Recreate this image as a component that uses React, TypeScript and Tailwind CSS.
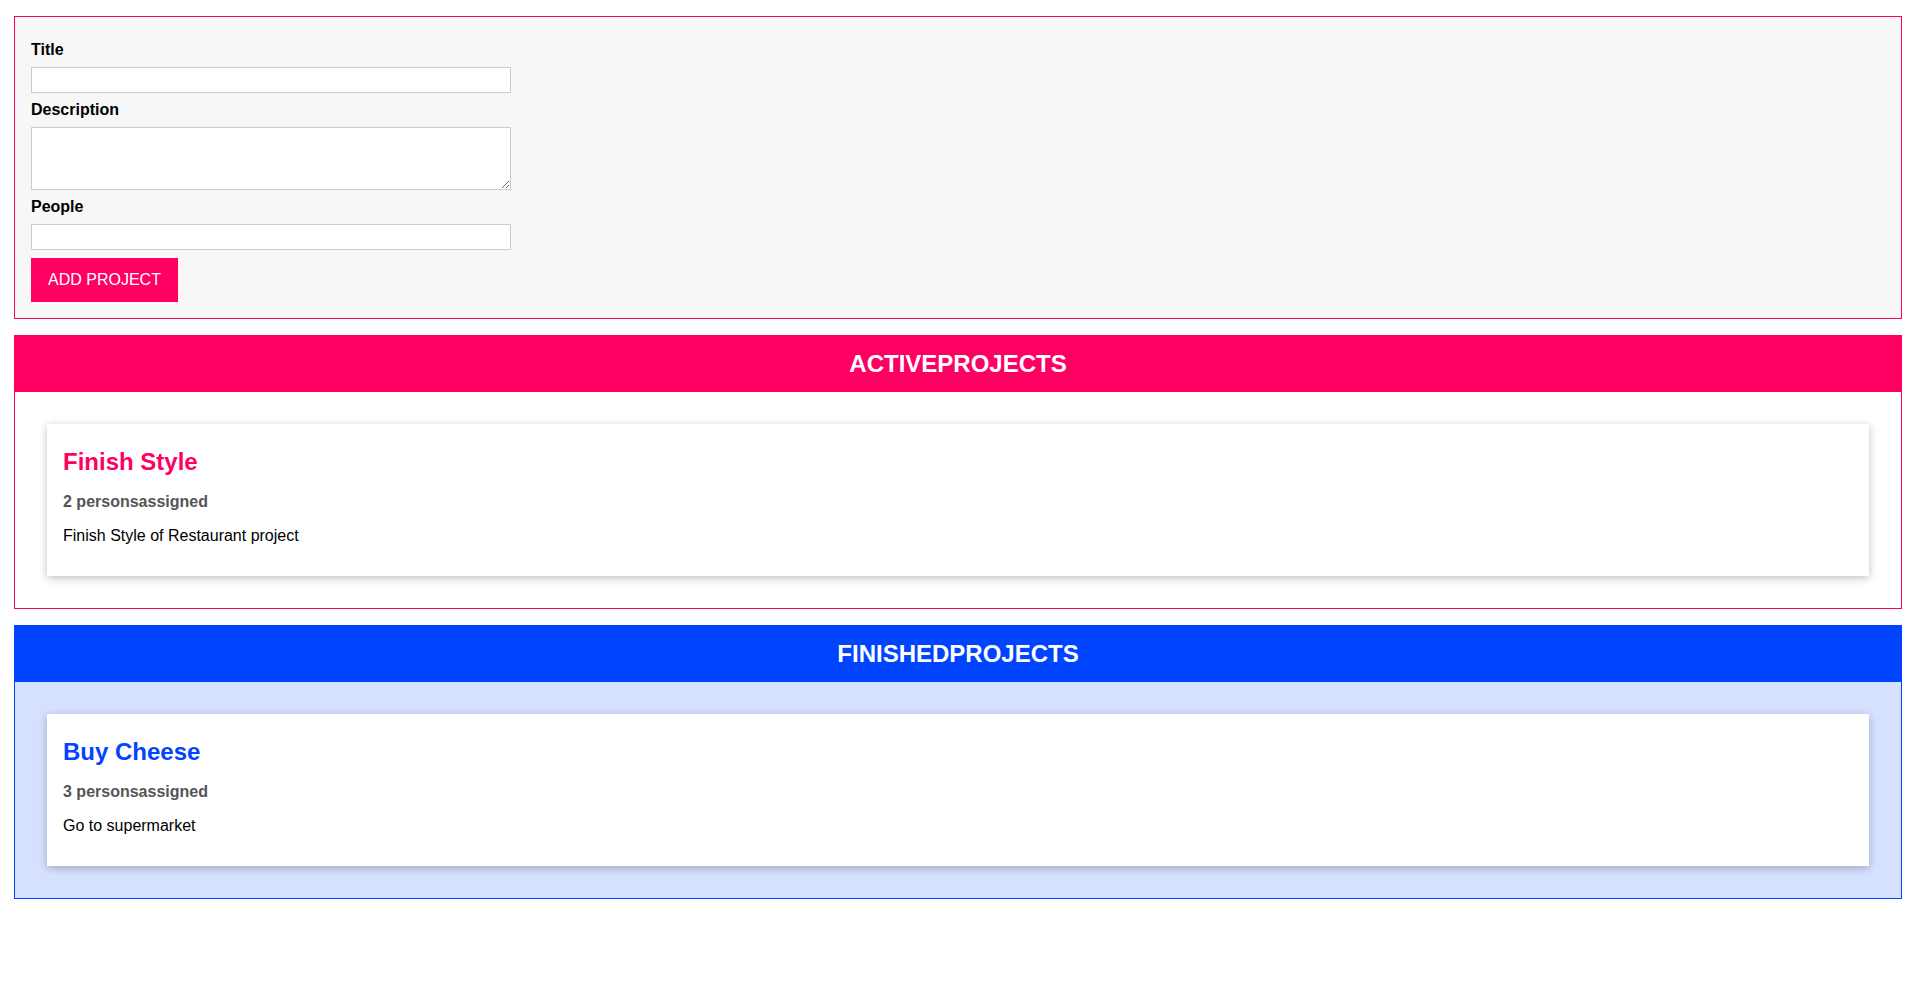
import React from "react";

function Section({
  title,
  variant,
  project,
}: {
  title: string;
  variant: "active" | "finished";
  project: { title: string; people: number; description: string };
}) {
  const active = variant === "active";
  return (
    <section
      className={
        active
          ? "ml-[14px] mr-[15px] mt-[16px] border border-[#ff0062] bg-white"
          : "ml-[14px] mr-[15px] mt-[16px] border border-[#0044ff] bg-[#d6e0ff]"
      }
    >
      <header
        className={
          active
            ? "h-[56px] flex items-center justify-center bg-[#ff0062]"
            : "h-[56px] flex items-center justify-center bg-[#0044ff]"
        }
      >
        <h2 className="text-white text-[24px] leading-[28px] font-bold">{title}</h2>
      </header>
      <div className="p-[32px]">
        <div className="bg-white shadow-[0_2px_8px_rgba(0,0,0,0.26)] pt-[24px] pb-[31px] px-[16px]">
          <h2
            className={
              active
                ? "text-[24px] leading-[28px] font-bold text-[#ff0062]"
                : "text-[24px] leading-[28px] font-bold text-[#0044ff]"
            }
          >
            {project.title}
          </h2>
          <h3 className="mt-[17px] text-[16px] leading-[18px] font-bold text-[#555555]">
            {project.people} personsassigned
          </h3>
          <p className="mt-[16px] text-[16px] leading-[18px] text-black">{project.description}</p>
        </div>
      </div>
    </section>
  );
}

export default function App() {
  return (
    <div className="min-h-[1007px] bg-white pt-[16px] font-['Liberation_Sans',Arial,sans-serif]">
      <form
        className="ml-[14px] mr-[15px] border border-[#ff0062] bg-[#f7f7f7] pt-[23px] pb-[16px] pl-[16px]"
        onSubmit={(e) => e.preventDefault()}
      >
        <label className="block font-bold text-[16px] leading-[20px] text-black mb-[7px]">
          Title
        </label>
        <input
          type="text"
          className="block w-[480px] h-[26px] border border-[#cccccc] bg-white"
        />
        <label className="block mt-[7px] font-bold text-[16px] leading-[20px] text-black mb-[7px]">
          Description
        </label>
        <textarea className="block w-[480px] h-[63px] border border-[#cccccc] bg-white" />
        <label className="block mt-[7px] font-bold text-[16px] leading-[20px] text-black mb-[7px]">
          People
        </label>
        <input
          type="number"
          className="block w-[480px] h-[26px] border border-[#cccccc] bg-white"
        />
        <button
          type="submit"
          className="mt-[8px] h-[44px] px-[17px] bg-[#ff0062] text-white text-[16px] leading-[20px]"
        >
          ADD PROJECT
        </button>
      </form>
      <Section
        title="ACTIVEPROJECTS"
        variant="active"
        project={{ title: "Finish Style", people: 2, description: "Finish Style of Restaurant project" }}
      />
      <Section
        title="FINISHEDPROJECTS"
        variant="finished"
        project={{ title: "Buy Cheese", people: 3, description: "Go to supermarket" }}
      />
    </div>
  );
}
